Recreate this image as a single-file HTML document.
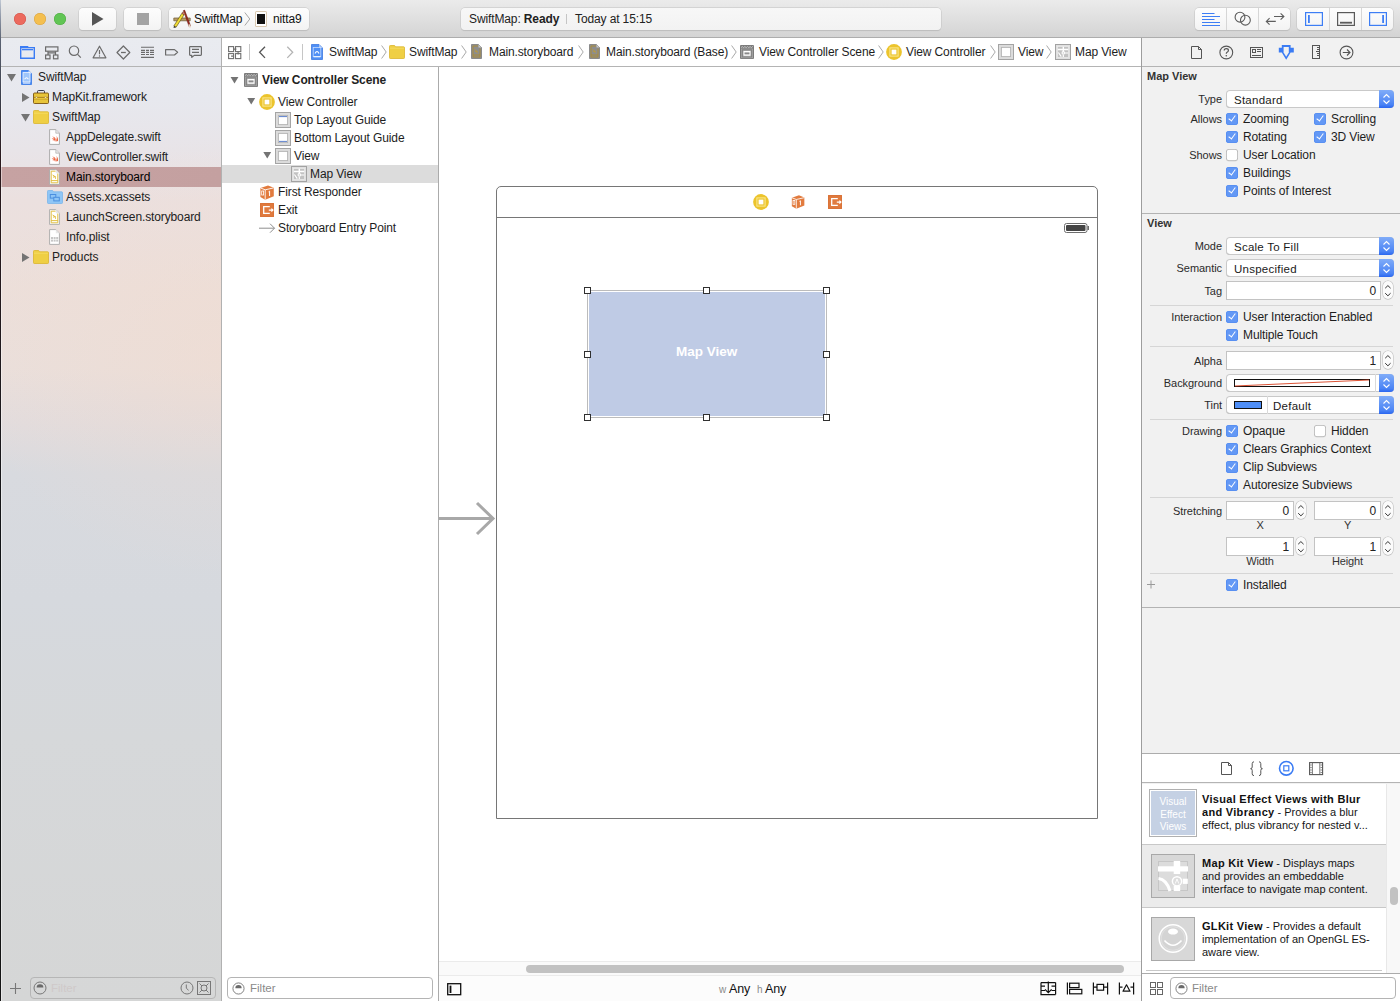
<!DOCTYPE html>
<html><head><meta charset="utf-8">
<style>
*{margin:0;padding:0;box-sizing:border-box}
html,body{width:1400px;height:1001px;overflow:hidden;background:#fff}
body{position:relative;font-family:"Liberation Sans",sans-serif;font-size:12px;color:#1d1d1d;letter-spacing:-0.12px}
.a{position:absolute}
.t{position:absolute;white-space:nowrap;line-height:14px}
svg{position:absolute;overflow:visible}
/* toolbar */
#tb{left:0;top:0;width:1400px;height:38px;background:linear-gradient(#ebebeb,#d4d4d4);border-bottom:1px solid #adadad}
.btn{position:absolute;top:8px;height:22px;border-radius:4px;background:linear-gradient(#fdfdfd,#f3f3f3);box-shadow:0 0 0 0.5px #c4c4c4,0 0.5px 1px rgba(0,0,0,.15)}
#nav{left:0;top:38px;width:221px;height:963px;background:radial-gradient(ellipse 260px 220px at 230px 320px,rgba(242,218,204,0.4),rgba(242,218,204,0) 100%),linear-gradient(180deg,#e9ebf0 0px,#e7e8ee 62px,#e8e4e8 112px,#ebe0df 162px,#ecdfda 250px,#eadfdb 330px,#e2dcdd 385px,#d8dadf 435px,#d6d9de 560px,#d6d8da 700px,#d5d6d6 963px)}
#navline{left:221px;top:38px;width:1px;height:963px;background:#b1b1b1}
#outline{left:222px;top:67px;width:216px;height:934px;background:#fff}
#olline{left:438px;top:67px;width:1px;height:934px;background:#ababab}
#jump{left:222px;top:38px;width:919px;height:28px;background:#fff}
#hline{left:0;top:66px;width:1400px;height:1px;background:#b4b4b4}
#insline{left:1141px;top:38px;width:1px;height:963px;background:#9d9d9d}
#insp{left:1142px;top:38px;width:258px;height:963px;background:#f1f1f1}
.nl{font-size:12px;color:#222}
.lab{position:absolute;white-space:nowrap;text-align:right;color:#2a2a2a;font-size:11px;line-height:14px;letter-spacing:-0.05px}
.cb{position:absolute;width:12px;height:12px;border-radius:3px;background:#6398f5;box-shadow:inset 0 0 0 0.6px #4f88f0}
.cb:after{content:"";position:absolute;left:3.7px;top:1.2px;width:3px;height:6.2px;border:solid #fff;border-width:0 1.9px 1.9px 0;transform:rotate(36deg)}
.cb.off{background:#fff;box-shadow:inset 0 0 0 0.8px #b4b4b4,0 0.5px 0.5px rgba(0,0,0,.1)}
.cb.off:after{display:none}
.pop{position:absolute;left:1226px;width:168px;height:18px;border-radius:4px;background:#fff;box-shadow:inset 0 0 0 1px #c9c9c9,inset 0 -1px 0 #b2b2b2}
.pop .st{position:absolute;right:0;top:0;width:15px;height:18px;border-radius:0 4px 4px 0;background:linear-gradient(#80acf8,#4b84f5 80%,#2a66f0)}
.fld{position:absolute;height:19px;background:#fff;border:1px solid #c3c3c3}
.stp{position:absolute;width:10px;height:18px;border-radius:5px;background:#fbfbfb;box-shadow:0 0 0 0.5px #b8b8b8,0 0.5px 0.5px rgba(0,0,0,.12)}
.lib{position:absolute;left:1202px;font-size:11px;line-height:13.2px;color:#161616;white-space:nowrap;letter-spacing:0}
.lib b{letter-spacing:0.3px;color:#111}
.sep{position:absolute;left:1150px;width:243px;height:1px;background:#d6d6d6}
</style></head><body>


<svg width="0" height="0" style="position:absolute;left:0;top:0">
<defs>
 <symbol id="tdown" viewBox="0 0 9 8"><path d="M0 0H9L4.5 7.5Z" fill="#747474"/></symbol>
 <symbol id="tright" viewBox="0 0 8 9"><path d="M0 0L7.5 4.5L0 9Z" fill="#747474"/></symbol>
 <symbol id="folderY" viewBox="0 0 16 14"><path d="M0.5 1.3Q0.5 0.5 1.3 0.5H5.6L6.6 1.8H14.7Q15.5 1.8 15.5 2.6V12.7Q15.5 13.5 14.7 13.5H1.3Q0.5 13.5 0.5 12.7Z" fill="#efcf44" stroke="#dbb52d" stroke-width="0.8"/><path d="M1 3.2H15" stroke="#f6de6a" stroke-width="0.8"/></symbol>
 <symbol id="proj" viewBox="0 0 11 15"><path d="M0.5 0.5H7.6L10.5 3.4V14.5H0.5Z" fill="#4b8ef5" stroke="#3f7fe6" stroke-width="0.9"/><path d="M7.6 0.5V3.4H10.5Z" fill="#e8f0fc"/><rect x="2" y="2.6" width="7" height="9.4" fill="#9ec6fb" stroke="#f2f7ff" stroke-width="0.8"/><path d="M2 13.1H9" stroke="#fff" stroke-width="0.9"/><path d="M3.6 9.2Q5.5 6.2 7.4 9.2" fill="none" stroke="#fff" stroke-width="1.1"/></symbol>
 <symbol id="swiftF" viewBox="0 0 11 16"><path d="M0.6 0.6H6.8L10.4 4.2V15.4H0.6Z" fill="#fff" stroke="#a4a4a4" stroke-width="0.9"/><path d="M6.8 0.6V4.2H10.4" fill="#e8e8e8" stroke="#a4a4a4" stroke-width="0.6"/><path d="M2.6 9.6Q5 11.6 7 10.5Q6.4 8.4 3.2 7.3Q5.5 9.4 5.8 9.6Q4 9.4 2.6 9.6ZM7.3 10.8Q8.2 12 9.1 11.6Q9.3 9.2 7.5 7.1Q8.4 9.6 7.3 10.8Z" fill="#ec5a33"/><path d="M3 11Q6 13 9 12L8.5 11Q6 12 3 11Z" fill="#e6502b"/></symbol>
 <symbol id="sbF" viewBox="0 0 11 16"><path d="M0.6 0.6H6.8L10.4 4.2V15.4H0.6Z" fill="#fff" stroke="#a8a8a8" stroke-width="0.9"/><path d="M6.8 0.6V4.2H10.4" fill="#e8e8e8"/><path d="M2.2 2.2H6.5M8.8 4.5V13.8H2.2V2.2M2.2 11.6H8.8" fill="none" stroke="#dfb82f" stroke-width="0.9"/><path d="M3.6 6Q6.5 6.8 6.6 9.8M4 8.3Q5.3 7 7 8" fill="none" stroke="#dfb82f" stroke-width="0.9"/></symbol>
 <symbol id="plistF" viewBox="0 0 11 16"><path d="M0.6 0.6H6.8L10.4 4.2V15.4H0.6Z" fill="#fff" stroke="#a8a8a8" stroke-width="0.9"/><path d="M6.8 0.6V4.2H10.4" fill="#e8e8e8"/><g fill="#c6c6c6"><rect x="2" y="8" width="2" height="2"/><rect x="4.6" y="8" width="2" height="2"/><rect x="7.2" y="8" width="2" height="2"/><rect x="2" y="10.6" width="2" height="2"/><rect x="4.6" y="10.6" width="2" height="2"/><rect x="7.2" y="10.6" width="2" height="2"/></g></symbol>
 <symbol id="assets" viewBox="0 0 16 14"><path d="M0.5 1.3Q0.5 0.5 1.3 0.5H5.6L6.6 1.8H14.7Q15.5 1.8 15.5 2.6V12.7Q15.5 13.5 14.7 13.5H1.3Q0.5 13.5 0.5 12.7Z" fill="#8fc6f6" stroke="#7ab5ea" stroke-width="0.8"/><rect x="3.3" y="4.5" width="5.5" height="3.6" fill="none" stroke="#4a8fdf" stroke-width="1"/><rect x="6.8" y="7.3" width="5.5" height="3.6" fill="#8fc6f6" stroke="#4a8fdf" stroke-width="1"/></symbol>
 <symbol id="toolbox" viewBox="0 0 16 14"><path d="M4.5 3.2V1.6Q4.5 0.5 5.6 0.5H10.4Q11.5 0.5 11.5 1.6V3.2" fill="none" stroke="#20263a" stroke-width="0.9"/><rect x="0.5" y="3" width="15" height="10.5" rx="1" fill="#e7c43a" stroke="#7a5410" stroke-width="0.9"/><path d="M0.8 7.4H15.2" stroke="#a47b1f" stroke-width="0.9"/><path d="M1 9.5H15" stroke="#cfa92d" stroke-width="0.8"/><circle cx="3.4" cy="7.4" r="0.9" fill="#fff8d0" stroke="#a47b1f" stroke-width="0.4"/><circle cx="12.6" cy="7.4" r="0.9" fill="#fff8d0" stroke="#a47b1f" stroke-width="0.4"/></symbol>
 <symbol id="chev" viewBox="0 0 6 14"><path d="M0.6 0.5L5.2 7L0.6 13.5" fill="none" stroke="#a9a9a9" stroke-width="1"/></symbol>
 <symbol id="sbDark" viewBox="0 0 11 15"><path d="M0.5 0.5H7.5L10.5 3.5V14.5H0.5Z" fill="#8d8d8d" stroke="#7b7b7b" stroke-width="0.8"/><path d="M7.5 0.5V3.5H10.5Z" fill="#c8c8c8"/><path d="M2 2H7M9 4.5V13H2V2M2 11H9" fill="none" stroke="#ad8d32" stroke-width="0.9"/><path d="M3.4 5.5Q6.2 6.3 6.3 9.2M3.8 7.8Q5 6.5 6.7 7.5" fill="none" stroke="#b89a3e" stroke-width="0.9"/></symbol>
 <symbol id="scene" viewBox="0 0 14 14"><rect x="0" y="0" width="14" height="14" rx="1" fill="#7b7b7b"/><path d="M1 2.6L2.3 1.6L3.6 2.6L4.9 1.6L6.2 2.6L7.5 1.6L8.8 2.6L10.1 1.6L11.4 2.6L12.7 1.6L13 2" fill="none" stroke="#d6d6d6" stroke-width="0.8"/><rect x="1.4" y="4" width="11.2" height="8.8" fill="none" stroke="#a8a8a8" stroke-width="0.8"/><rect x="3" y="5.6" width="8" height="5.6" fill="#fff" stroke="#9a9a9a" stroke-width="0.8"/><rect x="4.5" y="7.4" width="5" height="2" fill="#8a8a8a"/></symbol>
 <symbol id="vc" viewBox="0 0 16 16"><circle cx="8" cy="8" r="7.9" fill="#ecc42c"/><rect x="3.9" y="3.9" width="8.2" height="8.2" fill="none" stroke="#fae68a" stroke-width="1.1"/><rect x="5.6" y="5.6" width="4.8" height="4.8" fill="#fff"/></symbol>
 <symbol id="viewI" viewBox="0 0 16 16"><rect x="0.5" y="0.5" width="15" height="15" fill="#dcdcdc" stroke="#a4a4a4" stroke-width="1"/><rect x="3.4" y="3.4" width="9.2" height="9.2" fill="#fff" stroke="#b4b4b4" stroke-width="0.9"/></symbol>
 <symbol id="mapI" viewBox="0 0 16 16"><rect x="0.5" y="0.5" width="15" height="15" fill="#e0e0e0" stroke="#a2a2a2" stroke-width="1"/><rect x="2.6" y="2.6" width="10.8" height="10.8" fill="#c2c2c2" stroke="#ececec" stroke-width="0.7"/><path d="M2.8 5.5H13.2M8.3 2.8V7.5" stroke="#fff" stroke-width="1.4" fill="none"/><path d="M10 9H13.2M3.4 8.5L6.3 12.6M8.3 10.9V13" stroke="#fff" stroke-width="1.2" fill="none"/><circle cx="8.3" cy="8.9" r="1.25" fill="#c2c2c2" stroke="#fff" stroke-width="1.1"/></symbol>
 <symbol id="frI" viewBox="0 0 14 15"><path d="M0.4 2.9L8 0.4L13.8 2.8V11.2L5.2 14.8L0.4 12Z" fill="#e27b3e"/><path d="M0.6 3L5.2 4.8L13.6 2.9M5.2 4.8V14.6" fill="none" stroke="#fff" stroke-width="0.9"/><rect x="1.7" y="6" width="1.9" height="4" fill="none" stroke="#fff" stroke-width="0.8"/><path d="M8.6 6.8L9.6 6.2V11" fill="none" stroke="#fff" stroke-width="1"/></symbol>
 <symbol id="exitI" viewBox="0 0 14 14"><rect x="0" y="0" width="14" height="14" fill="#e07b3f"/><rect x="0.8" y="0.8" width="12.4" height="12.4" fill="none" stroke="#d46d33" stroke-width="0.6"/><path d="M9.8 3.7H3.7V10.4H9.8" fill="none" stroke="#fff" stroke-width="1.3"/><path d="M8.8 7.1H13M11.4 5.6L13 7.1L11.4 8.6" fill="none" stroke="#fff" stroke-width="1.1"/></symbol>
 <symbol id="guideT" viewBox="0 0 16 16"><rect x="0.5" y="0.5" width="15" height="15" fill="#dcdcdc" stroke="#a4a4a4" stroke-width="1"/><rect x="3.4" y="3.4" width="9.2" height="9.2" fill="#fff" stroke="#b4b4b4" stroke-width="0.9"/><path d="M4 4.6H12" stroke="#4a72c6" stroke-width="0.9"/></symbol>
 <symbol id="guideB" viewBox="0 0 16 16"><rect x="0.5" y="0.5" width="15" height="15" fill="#dcdcdc" stroke="#a4a4a4" stroke-width="1"/><rect x="3.4" y="3.4" width="9.2" height="9.2" fill="#fff" stroke="#b4b4b4" stroke-width="0.9"/><path d="M4 11.4H12" stroke="#4a72c6" stroke-width="0.9"/></symbol>
</defs></svg>

<!-- ============ TOOLBAR ============ -->
<div id="tb" class="a"></div>
<div class="a" style="left:0;top:0;width:1px;height:1001px;z-index:5;background:linear-gradient(#c0c8d4 0px,#8890a0 20px,#5a6272 40px,#3a3d48 100px,#2a181c 160px,#1e1a1e 400px,#0e1214 600px,#141414 1001px)"></div>
<div class="a" style="left:14px;top:13px;width:12px;height:12px;border-radius:50%;background:#ec6a5e;box-shadow:inset 0 0 0 0.5px #d0534a"></div>
<div class="a" style="left:34px;top:13px;width:12px;height:12px;border-radius:50%;background:#f4bf4f;box-shadow:inset 0 0 0 0.5px #d6a243"></div>
<div class="a" style="left:54px;top:13px;width:12px;height:12px;border-radius:50%;background:#61c554;box-shadow:inset 0 0 0 0.5px #4ea941"></div>

<div class="btn" style="left:79px;width:37px"></div>
<svg style="left:92px;top:12px" width="12" height="14"><path d="M0 0 L11.5 6.9 L0 13.8Z" fill="#555"/></svg>
<div class="btn" style="left:124px;width:37px"></div>
<div class="a" style="left:137px;top:13px;width:12px;height:12px;background:#a3a3a3"></div>

<div class="btn" style="left:169px;width:140px"></div>
<div class="t" style="left:194px;top:12px;font-size:12px;color:#111">SwiftMap</div>
<div class="t" style="left:273px;top:12px;font-size:12px;color:#111">nitta9</div>
<svg style="left:173px;top:10px" width="18" height="18">
 <path d="M0.8 8H17.2V10.8H0.8Z" fill="#b89c66" stroke="#6f5a35" stroke-width="0.7"/>
 <path d="M10.4 0.6L11.6 0.1L17.6 15.9L16.2 16.8Z" fill="#a32a1e" stroke="#5e130c" stroke-width="0.5"/>
 <path d="M15.4 14.5L17.3 14.2L17.8 17.4L16 17.4Z" fill="#e8d9c8"/>
 <path d="M0.9 15.8L8.9 3.3L11.1 4.7L3.1 17.2Z" fill="#f2dc36" stroke="#4f430f" stroke-width="0.6"/>
 <path d="M8.9 3.3L9.9 1.8L12.1 3.2L11.1 4.7Z" fill="#e9737d" stroke="#4f430f" stroke-width="0.5"/>
 <path d="M0.9 15.8L3.1 17.2L0.6 17.9Z" fill="#2a2a2a"/>
</svg>
<svg style="left:244px;top:12px" width="7" height="15"><path d="M0.8 0.5L5.8 7L0.8 13.5" fill="none" stroke="#9c9c9c" stroke-width="0.9"/></svg>
<div class="a" style="left:255px;top:11px;width:12px;height:16px;border-radius:1.5px;background:#fff;box-shadow:inset 0 0 0 1px #d9c8b0"></div>
<div class="a" style="left:257px;top:14px;width:8px;height:10px;background:#111"></div>

<div class="btn" style="left:461px;width:480px;background:linear-gradient(#f7f7f7,#f2f2f2)"></div>
<div class="t" style="left:469px;top:12px;color:#222">SwiftMap: <b>Ready</b></div>
<div class="a" style="left:566px;top:14px;width:1px;height:10px;background:#c5c5c5"></div>
<div class="t" style="left:575px;top:12px;color:#222">Today at 15:15</div>

<div class="btn" style="left:1195px;width:95px"></div>
<svg style="left:1202px;top:13px" width="19" height="14"><g stroke="#3d7ef5" stroke-width="1.2"><path d="M0 0.5H12.5M0 3.5H18M0 6.5H12.5M0 9.5H18M0 12.5H18"/></g></svg>
<svg style="left:1234px;top:11px" width="18" height="16"><g fill="none" stroke="#5a5a5a" stroke-width="1.1"><circle cx="6" cy="6.2" r="4.9"/><circle cx="11.4" cy="9.2" r="4.9"/></g></svg>
<svg style="left:1266px;top:13px" width="20" height="13"><g fill="none" stroke="#5e5e5e" stroke-width="1.1"><path d="M8 3.5H18M14.6 0.3L17.9 3.5L14.6 6.7"/><path d="M0.3 8.4H9.8M3.6 5.1L0.3 8.4L3.6 11.6"/></g></svg>
<div class="a" style="left:1226px;top:8px;width:1px;height:22px;background:#d6d6d6"></div>
<div class="a" style="left:1258px;top:8px;width:1px;height:22px;background:#d6d6d6"></div>
<div class="btn" style="left:1297px;width:96px"></div>
<svg style="left:1305px;top:12px" width="18" height="14"><rect x="0.6" y="0.6" width="16.8" height="12.8" fill="none" stroke="#3d7ef5" stroke-width="1.2"/><rect x="3" y="3" width="1.8" height="8" fill="#3d7ef5"/></svg>
<svg style="left:1337px;top:12px" width="18" height="14"><rect x="0.6" y="0.6" width="16.8" height="12.8" fill="none" stroke="#5a5a5a" stroke-width="1.2"/><rect x="3" y="9.8" width="12" height="1.8" fill="#5a5a5a"/></svg>
<svg style="left:1369px;top:12px" width="18" height="14"><rect x="0.6" y="0.6" width="16.8" height="12.8" fill="none" stroke="#3d7ef5" stroke-width="1.2"/><rect x="13.2" y="3" width="1.8" height="8" fill="#3d7ef5"/></svg>
<div class="a" style="left:1329px;top:8px;width:1px;height:22px;background:#d6d6d6"></div>
<div class="a" style="left:1361px;top:8px;width:1px;height:22px;background:#d6d6d6"></div>

<!-- ============ PANELS ============ -->
<div id="nav" class="a"></div>
<div id="jump" class="a"></div>
<div id="outline" class="a"></div>
<div id="insp" class="a"></div>
<div id="hline" class="a"></div>
<div id="navline" class="a"></div>
<div class="a" style="left:1px;top:67px;width:1px;height:934px;background:rgba(255,255,255,0.45);z-index:4"></div>
<div id="olline" class="a"></div>
<div id="insline" class="a"></div>

<!-- ============ NAVIGATOR ============ -->
<div class="a" style="left:1px;top:167px;width:220px;height:20px;background:linear-gradient(90deg,#c6a2a2,#c4a0a0)"></div>
<div class="t nl" style="left:38px;top:70px">SwiftMap</div>
<div class="t nl" style="left:52px;top:90px">MapKit.framework</div>
<div class="t nl" style="left:52px;top:110px">SwiftMap</div>
<div class="t nl" style="left:66px;top:130px">AppDelegate.swift</div>
<div class="t nl" style="left:66px;top:150px">ViewController.swift</div>
<div class="t nl" style="left:66px;top:170px;color:#000">Main.storyboard</div>
<div class="t nl" style="left:66px;top:190px">Assets.xcassets</div>
<div class="t nl" style="left:66px;top:210px">LaunchScreen.storyboard</div>
<div class="t nl" style="left:66px;top:230px">Info.plist</div>
<div class="t nl" style="left:52px;top:250px">Products</div>


<svg style="left:7px;top:74px" width="9" height="8"><use href="#tdown"/></svg>
<svg style="left:21px;top:70px" width="11" height="15"><use href="#proj"/></svg>
<svg style="left:22px;top:93px" width="8" height="9"><use href="#tright"/></svg>
<svg style="left:33px;top:90px" width="16" height="14"><use href="#toolbox"/></svg>
<svg style="left:21px;top:114px" width="9" height="8"><use href="#tdown"/></svg>
<svg style="left:33px;top:110px" width="16" height="14"><use href="#folderY"/></svg>
<svg style="left:49px;top:129px" width="11" height="16"><use href="#swiftF"/></svg>
<svg style="left:49px;top:149px" width="11" height="16"><use href="#swiftF"/></svg>
<svg style="left:49px;top:169px" width="11" height="16"><use href="#sbF"/></svg>
<svg style="left:47px;top:190px" width="16" height="14"><use href="#assets"/></svg>
<svg style="left:49px;top:209px" width="11" height="16"><use href="#sbF"/></svg>
<svg style="left:49px;top:229px" width="11" height="16"><use href="#plistF"/></svg>
<svg style="left:22px;top:253px" width="8" height="9"><use href="#tright"/></svg>
<svg style="left:33px;top:250px" width="16" height="14"><use href="#folderY"/></svg>

<!-- ============ OUTLINE ============ -->
<div class="a" style="left:222px;top:165px;width:216px;height:18px;background:#dcdcdc"></div>
<div class="t" style="left:262px;top:73px;font-weight:bold;color:#222">View Controller Scene</div>
<div class="t" style="left:278px;top:95px">View Controller</div>
<div class="t" style="left:294px;top:113px">Top Layout Guide</div>
<div class="t" style="left:294px;top:131px">Bottom Layout Guide</div>
<div class="t" style="left:294px;top:149px">View</div>
<div class="t" style="left:310px;top:167px">Map View</div>
<div class="t" style="left:278px;top:185px">First Responder</div>
<div class="t" style="left:278px;top:203px">Exit</div>
<div class="t" style="left:278px;top:221px">Storyboard Entry Point</div>


<!-- ============ NAV TAB ICONS ============ -->
<svg style="left:20px;top:46px" width="15" height="13"><g fill="none" stroke="#3b7cf4" stroke-width="1.4"><path d="M0.7 12.3V1.6H7.5V0.7H7.6V1.6H14.3V12.3Z"/><path d="M2 3.6H13"/></g><path d="M0 0H8V1.5H0Z" fill="#3b7cf4"/></svg>
<svg style="left:45px;top:46px" width="14" height="14"><g fill="none" stroke="#6b6b6b" stroke-width="1.2"><rect x="0.6" y="0.9" width="12.3" height="4.3"/><path d="M3 5.2V9M10.5 5.2V9M3 6.9H10.5"/><rect x="0.6" y="9" width="4.4" height="3.8"/><rect x="8.5" y="9" width="4.4" height="3.8"/></g></svg>
<svg style="left:68px;top:45px" width="14" height="14"><g fill="none" stroke="#6b6b6b" stroke-width="1.2"><circle cx="6" cy="5.7" r="4.7"/><path d="M9.4 9.2L12.8 12.6"/></g></svg>
<svg style="left:92px;top:45px" width="15" height="15"><g fill="none" stroke="#6b6b6b" stroke-width="1.2" stroke-linejoin="round"><path d="M7.5 1.2L13.9 12.8H1.1Z"/><path d="M7.5 5V9.3"/></g><circle cx="7.5" cy="11" r="0.7" fill="#6b6b6b"/></svg>
<svg style="left:116px;top:45px" width="15" height="15"><g fill="none" stroke="#6b6b6b" stroke-width="1.2" stroke-linejoin="round"><path d="M7.4 1L13.8 7.5L7.4 14L1 7.5Z"/><path d="M5 7.5H9.8" stroke-width="1.3"/></g></svg>
<svg style="left:141px;top:46px" width="14" height="13"><g fill="none" stroke="#6b6b6b" stroke-width="1.1"><path d="M0 1.3H13M0 11.4H13"/><path d="M0 4.4H4M5 4.4H8M9 4.4H13M0 6.4H4M5 6.4H8M9 6.4H13M0 8.5H4M5 8.5H8M9 8.5H13"/></g></svg>
<svg style="left:165px;top:49px" width="14" height="8"><path d="M0.6 0.6H9.5L12.6 3.3L9.5 6H0.6Z" fill="none" stroke="#6b6b6b" stroke-width="1.2" stroke-linejoin="round"/></svg>
<svg style="left:189px;top:46px" width="14" height="13"><g fill="none" stroke="#6b6b6b" stroke-width="1.2" stroke-linejoin="round"><path d="M1.2 0.6H11.6Q12.4 0.6 12.4 1.4V8.6Q12.4 9.4 11.6 9.4H5.2L2.8 11.4V9.4H1.2Q0.6 9.4 0.6 8.6V1.4Q0.6 0.6 1.2 0.6Z"/><path d="M3 3.4H10M3 6.4H10"/></g></svg>

<!-- ============ JUMP BAR ICONS ============ -->
<svg style="left:228px;top:46px" width="14" height="14"><g fill="none" stroke="#6e6e6e" stroke-width="1.1"><rect x="0.6" y="0.6" width="5" height="5"/><rect x="7.5" y="0.6" width="5.3" height="5"/><rect x="0.6" y="7.6" width="5" height="5"/><rect x="7.5" y="7.6" width="5.3" height="5"/><path d="M5.6 3.1H8.4M10.1 5.6V8.4M3.1 10.1H5.6"/></g></svg>
<div class="a" style="left:249px;top:44px;width:1px;height:16px;background:#c6c6c6"></div>
<svg style="left:258px;top:46px" width="9" height="13"><path d="M7 0.7L1.6 6.3L7 11.9" fill="none" stroke="#555" stroke-width="1.3"/></svg>
<svg style="left:286px;top:46px" width="9" height="13"><path d="M1.3 0.7L6.7 6.3L1.3 11.9" fill="none" stroke="#b4b4b4" stroke-width="1.3"/></svg>
<div class="a" style="left:302px;top:44px;width:1px;height:16px;background:#c6c6c6"></div>
<svg style="left:311px;top:44px" width="12" height="16"><path d="M0.5 0.5H8L11.5 4V15.5H0.5Z" fill="#4f8ff5" stroke="#3d78e0" stroke-width="0.8"/><path d="M8 0.5V4H11.5" fill="#a9c8fa"/><rect x="2.2" y="3.5" width="7.6" height="9" fill="none" stroke="#c7dcfd" stroke-width="0.8"/><path d="M2.5 12.8H9.5" stroke="#fff" stroke-width="1"/><path d="M4 9.5Q6 5.5 8 9.5" fill="none" stroke="#fff" stroke-width="1.1"/></svg>


<svg style="left:230px;top:77px" width="9" height="7"><use href="#tdown"/></svg>
<svg style="left:244px;top:73px" width="14" height="14"><use href="#scene"/></svg>
<svg style="left:247px;top:98px" width="8.5" height="7"><use href="#tdown"/></svg>
<svg style="left:259px;top:94px" width="16" height="16"><use href="#vc"/></svg>
<svg style="left:275px;top:112px" width="16" height="16"><use href="#guideT"/></svg>
<svg style="left:275px;top:130px" width="16" height="16"><use href="#guideB"/></svg>
<svg style="left:263px;top:152px" width="8.5" height="7"><use href="#tdown"/></svg>
<svg style="left:275px;top:148px" width="16" height="16"><use href="#viewI"/></svg>
<svg style="left:291px;top:166px" width="16" height="16"><use href="#mapI"/></svg>
<svg style="left:260px;top:185px" width="14" height="15"><use href="#frI"/></svg>
<svg style="left:260px;top:203px" width="14" height="14"><use href="#exitI"/></svg>
<svg style="left:259px;top:223px" width="17" height="11"><path d="M0 5.2H15.5M11 0.7L15.5 5.2L11 9.7" fill="none" stroke="#8e8e8e" stroke-width="1"/></svg>

<!-- ============ JUMP BAR ============ -->
<div class="t" style="left:329px;top:45px">SwiftMap</div>
<div class="t" style="left:409px;top:45px">SwiftMap</div>
<div class="t" style="left:489px;top:45px">Main.storyboard</div>
<div class="t" style="left:606px;top:45px">Main.storyboard (Base)</div>
<div class="t" style="left:759px;top:45px">View Controller Scene</div>
<div class="t" style="left:906px;top:45px">View Controller</div>
<div class="t" style="left:1018px;top:45px">View</div>
<div class="t" style="left:1075px;top:45px">Map View</div>


<svg style="left:381px;top:45px" width="6" height="14"><use href="#chev"/></svg>
<svg style="left:389px;top:45px" width="16" height="14"><use href="#folderY"/></svg>
<svg style="left:461px;top:45px" width="6" height="14"><use href="#chev"/></svg>
<svg style="left:471px;top:44px" width="11" height="15"><use href="#sbDark"/></svg>
<svg style="left:578px;top:45px" width="6" height="14"><use href="#chev"/></svg>
<svg style="left:589px;top:44px" width="11" height="15"><use href="#sbDark"/></svg>
<svg style="left:731px;top:45px" width="6" height="14"><use href="#chev"/></svg>
<svg style="left:740px;top:45px" width="14" height="14"><use href="#scene"/></svg>
<svg style="left:878px;top:45px" width="6" height="14"><use href="#chev"/></svg>
<svg style="left:886px;top:44px" width="16" height="16"><use href="#vc"/></svg>
<svg style="left:990px;top:45px" width="6" height="14"><use href="#chev"/></svg>
<svg style="left:998px;top:44px" width="16" height="16"><use href="#viewI"/></svg>
<svg style="left:1046px;top:45px" width="6" height="14"><use href="#chev"/></svg>
<svg style="left:1055px;top:44px" width="16" height="16"><use href="#mapI"/></svg>

<!-- ============ CANVAS ============ -->
<div class="a" style="left:496px;top:186px;width:602px;height:633px;border:1px solid #767676;border-radius:5px 5px 0 0"></div>
<div class="a" style="left:497px;top:217px;width:600px;height:1px;background:#767676"></div>
<svg style="left:753px;top:194px" width="16" height="16"><use href="#vc"/></svg>
<svg style="left:791px;top:195px" width="14" height="14"><use href="#frI"/></svg>
<svg style="left:828px;top:195px" width="14" height="14"><use href="#exitI"/></svg>
<svg style="left:1064px;top:223px" width="27" height="11"><rect x="0.5" y="0.5" width="22.5" height="9" rx="2" fill="#fff" stroke="#6d6d6d" stroke-width="1"/><rect x="2" y="2" width="19.5" height="6" rx="1" fill="#454545"/><rect x="23.5" y="3" width="1.5" height="4" fill="#6d6d6d"/></svg>
<div class="a" style="left:587px;top:290px;width:240px;height:128px;border:1px solid #bcbcbc;background:#fff"></div>
<div class="a" style="left:589px;top:292px;width:236px;height:124px;background:#bfcbe5"></div>
<div class="t" style="left:676px;top:345px;font-weight:bold;font-size:13.5px;color:#fff;letter-spacing:0">Map View</div>
<div class="a" style="left:584px;top:287px;width:7px;height:7px;border:1px solid #303030;background:#fff"></div>
<div class="a" style="left:703px;top:287px;width:7px;height:7px;border:1px solid #303030;background:#fff"></div>
<div class="a" style="left:823px;top:287px;width:7px;height:7px;border:1px solid #303030;background:#fff"></div>
<div class="a" style="left:584px;top:351px;width:7px;height:7px;border:1px solid #303030;background:#fff"></div>
<div class="a" style="left:823px;top:351px;width:7px;height:7px;border:1px solid #303030;background:#fff"></div>
<div class="a" style="left:584px;top:414px;width:7px;height:7px;border:1px solid #303030;background:#fff"></div>
<div class="a" style="left:703px;top:414px;width:7px;height:7px;border:1px solid #303030;background:#fff"></div>
<div class="a" style="left:823px;top:414px;width:7px;height:7px;border:1px solid #303030;background:#fff"></div>
<svg style="left:439px;top:501px" width="58" height="36"><path d="M0 17.5H54M38 2L54 17.5L38 33" fill="none" stroke="#a8a8a8" stroke-width="3"/></svg>
<!-- bottom bar -->
<div class="a" style="left:439px;top:961px;width:702px;height:15px;background:#fafafa;border-top:1px solid #ebebeb;border-bottom:1px solid #ebebeb"></div>
<div class="a" style="left:526px;top:965px;width:598px;height:8px;border-radius:4px;background:#c2c2c2"></div>
<div class="a" style="left:439px;top:976px;width:702px;height:25px;background:#fcfcfc"></div>
<svg style="left:447px;top:983px" width="15" height="13"><rect x="0.7" y="0.7" width="13" height="11" fill="none" stroke="#111" stroke-width="1.3"/><rect x="2.6" y="2.6" width="1.8" height="7.4" fill="#111"/></svg>
<div class="t" style="left:719px;top:983px;font-size:10px;color:#8a8a8a;letter-spacing:0">w</div>
<div class="t" style="left:729px;top:982px;font-size:12.5px;color:#111;letter-spacing:-0.2px">Any</div>
<div class="t" style="left:757px;top:983px;font-size:10px;color:#8a8a8a;letter-spacing:0">h</div>
<div class="t" style="left:765px;top:982px;font-size:12.5px;color:#111;letter-spacing:-0.2px">Any</div>

<!-- ============ INSPECTOR ============ -->
<!-- ============ INSPECTOR CONTENT ============ -->
<svg style="left:1191px;top:46px" width="12" height="14"><path d="M0.5 0.5H7.5L10.5 3.5V12.5H0.5Z M7.5 0.5V3.5H10.5" fill="none" stroke="#555" stroke-width="1"/></svg>
<svg style="left:1219px;top:45px" width="15" height="15"><circle cx="7.3" cy="7.5" r="6.4" fill="none" stroke="#555" stroke-width="1.1"/><path d="M5.2 5.6Q5.2 3.7 7.3 3.7Q9.4 3.7 9.4 5.5Q9.4 6.6 8.1 7.2Q7.3 7.6 7.3 8.7" fill="none" stroke="#555" stroke-width="1.2"/><circle cx="7.3" cy="10.7" r="0.8" fill="#555"/></svg>
<svg style="left:1250px;top:47px" width="14" height="11"><rect x="0.5" y="0.5" width="12" height="10" fill="none" stroke="#555" stroke-width="1"/><rect x="2" y="2" width="4" height="4" fill="#555"/><rect x="3" y="3" width="2" height="2" fill="#f1f1f1"/><path d="M7 2.5H11M7 4.5H11M2 8.5H11" stroke="#555" stroke-width="1"/></svg>
<svg style="left:1278px;top:44px" width="17" height="17"><path d="M3.8 1H12.6V3.8H15.8V8.4H12.6L8.2 15.8L3.8 8.4H0.8V3.8H3.8Z" fill="#3b7cf4"/><path d="M5.6 3H10.8V8.6L8.2 12.8L5.6 8.6Z" fill="#f1f1f1"/></svg>
<svg style="left:1312px;top:45px" width="9" height="15"><rect x="0.5" y="0.5" width="7" height="13" fill="none" stroke="#555" stroke-width="1"/><path d="M5 2.5H7.5M5 4.5H7.5M4 6.5H7.5M5 8.5H7.5M5 10.5H7.5" stroke="#555" stroke-width="1"/></svg>
<svg style="left:1339px;top:45px" width="15" height="15"><circle cx="7.5" cy="7.5" r="6.4" fill="none" stroke="#555" stroke-width="1.1"/><path d="M3.8 7.5H11M8 4.5L11 7.5L8 10.5" fill="none" stroke="#555" stroke-width="1.1"/></svg>
<div class="t" style="left:1147px;top:69px;font-weight:bold;font-size:11px;color:#333;letter-spacing:0">Map View</div>
<div class="lab" style="right:178px;top:92.2px">Type</div>
<div class="pop" style="top:90px;height:18px"><div class="st" style="height:18px"></div></div>
<svg style="left:1382px;top:93px" width="9" height="12"><path d="M1.5 4.5L4.5 1.5L7.5 4.5M1.5 7.5L4.5 10.5L7.5 7.5" fill="none" stroke="#fff" stroke-width="1.1"/></svg>
<div class="t" style="left:1234px;top:93.0px;color:#1a1a1a;font-size:11.5px;letter-spacing:0.25px">Standard</div>
<div class="lab" style="right:178px;top:112.2px">Allows</div>
<div class="cb" style="left:1226px;top:113px"></div>
<div class="t" style="left:1243px;top:111.8px;">Zooming</div>
<div class="cb" style="left:1314px;top:113px"></div>
<div class="t" style="left:1331px;top:111.8px;">Scrolling</div>
<div class="cb" style="left:1226px;top:131px"></div>
<div class="t" style="left:1243px;top:129.8px;">Rotating</div>
<div class="cb" style="left:1314px;top:131px"></div>
<div class="t" style="left:1331px;top:129.8px;">3D View</div>
<div class="lab" style="right:178px;top:148.2px">Shows</div>
<div class="cb off" style="left:1226px;top:149px"></div>
<div class="t" style="left:1243px;top:147.8px;">User Location</div>
<div class="cb" style="left:1226px;top:167px"></div>
<div class="t" style="left:1243px;top:165.8px;">Buildings</div>
<div class="cb" style="left:1226px;top:185px"></div>
<div class="t" style="left:1243px;top:183.8px;">Points of Interest</div>
<div class="a" style="left:1142px;top:213px;width:258px;height:1px;background:#b3b3b3"></div>
<div class="t" style="left:1147px;top:216px;font-weight:bold;font-size:11px;color:#333;letter-spacing:0">View</div>
<div class="lab" style="right:178px;top:239.2px">Mode</div>
<div class="pop" style="top:237px;height:18px"><div class="st" style="height:18px"></div></div>
<svg style="left:1382px;top:240px" width="9" height="12"><path d="M1.5 4.5L4.5 1.5L7.5 4.5M1.5 7.5L4.5 10.5L7.5 7.5" fill="none" stroke="#fff" stroke-width="1.1"/></svg>
<div class="t" style="left:1234px;top:240.0px;color:#1a1a1a;font-size:11.5px;letter-spacing:0.25px">Scale To Fill</div>
<div class="lab" style="right:178px;top:261.2px">Semantic</div>
<div class="pop" style="top:259px;height:18px"><div class="st" style="height:18px"></div></div>
<svg style="left:1382px;top:262px" width="9" height="12"><path d="M1.5 4.5L4.5 1.5L7.5 4.5M1.5 7.5L4.5 10.5L7.5 7.5" fill="none" stroke="#fff" stroke-width="1.1"/></svg>
<div class="t" style="left:1234px;top:262.0px;color:#1a1a1a;font-size:11.5px;letter-spacing:0.25px">Unspecified</div>
<div class="lab" style="right:178px;top:284.2px">Tag</div>
<div class="fld" style="left:1226px;top:281px;width:155px;height:19px"></div>
<div class="t" style="right:24px;top:284px;color:#222">0</div>
<div class="stp" style="left:1383px;top:281px"></div>
<svg style="left:1384px;top:284px" width="8" height="14"><path d="M1.2 4.2L3.9 1.6L6.6 4.2M1.2 9.2L3.9 11.8L6.6 9.2" fill="none" stroke="#333" stroke-width="1"/></svg>
<div class="sep" style="top:305px"></div>
<div class="lab" style="right:178px;top:310.2px">Interaction</div>
<div class="cb" style="left:1226px;top:311px"></div>
<div class="t" style="left:1243px;top:309.8px;">User Interaction Enabled</div>
<div class="cb" style="left:1226px;top:329px"></div>
<div class="t" style="left:1243px;top:327.8px;">Multiple Touch</div>
<div class="sep" style="top:346px"></div>
<div class="lab" style="right:178px;top:354.2px">Alpha</div>
<div class="fld" style="left:1226px;top:351px;width:155px;height:19px"></div>
<div class="t" style="right:24px;top:354px;color:#222">1</div>
<div class="stp" style="left:1383px;top:351px"></div>
<svg style="left:1384px;top:354px" width="8" height="14"><path d="M1.2 4.2L3.9 1.6L6.6 4.2M1.2 9.2L3.9 11.8L6.6 9.2" fill="none" stroke="#333" stroke-width="1"/></svg>
<div class="lab" style="right:178px;top:376.2px">Background</div>
<div class="pop" style="top:374px;height:18px"><div class="st" style="height:18px"></div></div>
<svg style="left:1382px;top:377px" width="9" height="12"><path d="M1.5 4.5L4.5 1.5L7.5 4.5M1.5 7.5L4.5 10.5L7.5 7.5" fill="none" stroke="#fff" stroke-width="1.1"/></svg>
<div class="a" style="left:1234px;top:379px;width:136px;height:8px;background:#fff;border:1px solid #111"></div>
<svg style="left:1235px;top:380px" width="134" height="6"><path d="M0 6L134 0" stroke="#d8401e" stroke-width="0.9"/></svg>
<div class="a" style="left:1375px;top:374px;width:1px;height:18px;background:#dadada"></div>
<div class="lab" style="right:178px;top:398.2px">Tint</div>
<div class="pop" style="top:396px;height:18px"><div class="st" style="height:18px"></div></div>
<svg style="left:1382px;top:399px" width="9" height="12"><path d="M1.5 4.5L4.5 1.5L7.5 4.5M1.5 7.5L4.5 10.5L7.5 7.5" fill="none" stroke="#fff" stroke-width="1.1"/></svg>
<div class="t" style="left:1273px;top:399.0px;color:#1a1a1a;font-size:11.5px;letter-spacing:0.25px">Default</div>
<div class="a" style="left:1234px;top:401px;width:28px;height:8px;background:#4e8ef7;border:1px solid #111"></div>
<div class="a" style="left:1267px;top:396px;width:1px;height:18px;background:#dadada"></div>
<div class="sep" style="top:419px"></div>
<div class="lab" style="right:178px;top:424.2px">Drawing</div>
<div class="cb" style="left:1226px;top:425px"></div>
<div class="t" style="left:1243px;top:423.8px;">Opaque</div>
<div class="cb off" style="left:1314px;top:425px"></div>
<div class="t" style="left:1331px;top:423.8px;">Hidden</div>
<div class="cb" style="left:1226px;top:443px"></div>
<div class="t" style="left:1243px;top:441.8px;">Clears Graphics Context</div>
<div class="cb" style="left:1226px;top:461px"></div>
<div class="t" style="left:1243px;top:459.8px;">Clip Subviews</div>
<div class="cb" style="left:1226px;top:479px"></div>
<div class="t" style="left:1243px;top:477.8px;">Autoresize Subviews</div>
<div class="sep" style="top:497px"></div>
<div class="lab" style="right:178px;top:504.2px">Stretching</div>
<div class="fld" style="left:1226px;top:501px;width:68px;height:19px"></div>
<div class="t" style="right:111px;top:504px;color:#222">0</div>
<div class="stp" style="left:1296px;top:501px"></div>
<svg style="left:1297px;top:504px" width="8" height="14"><path d="M1.2 4.2L3.9 1.6L6.6 4.2M1.2 9.2L3.9 11.8L6.6 9.2" fill="none" stroke="#333" stroke-width="1"/></svg>
<div class="fld" style="left:1314px;top:501px;width:67px;height:19px"></div>
<div class="t" style="right:24px;top:504px;color:#222">0</div>
<div class="stp" style="left:1383px;top:501px"></div>
<svg style="left:1384px;top:504px" width="8" height="14"><path d="M1.2 4.2L3.9 1.6L6.6 4.2M1.2 9.2L3.9 11.8L6.6 9.2" fill="none" stroke="#333" stroke-width="1"/></svg>
<div class="t" style="left:1226px;width:68px;text-align:center;top:518px;font-size:11px;color:#333">X</div>
<div class="t" style="left:1314px;width:67px;text-align:center;top:518px;font-size:11px;color:#333">Y</div>
<div class="fld" style="left:1226px;top:537px;width:68px;height:19px"></div>
<div class="t" style="right:111px;top:540px;color:#222">1</div>
<div class="stp" style="left:1296px;top:537px"></div>
<svg style="left:1297px;top:540px" width="8" height="14"><path d="M1.2 4.2L3.9 1.6L6.6 4.2M1.2 9.2L3.9 11.8L6.6 9.2" fill="none" stroke="#333" stroke-width="1"/></svg>
<div class="fld" style="left:1314px;top:537px;width:67px;height:19px"></div>
<div class="t" style="right:24px;top:540px;color:#222">1</div>
<div class="stp" style="left:1383px;top:537px"></div>
<svg style="left:1384px;top:540px" width="8" height="14"><path d="M1.2 4.2L3.9 1.6L6.6 4.2M1.2 9.2L3.9 11.8L6.6 9.2" fill="none" stroke="#333" stroke-width="1"/></svg>
<div class="t" style="left:1226px;width:68px;text-align:center;top:554px;font-size:11px;color:#333">Width</div>
<div class="t" style="left:1314px;width:67px;text-align:center;top:554px;font-size:11px;color:#333">Height</div>
<div class="sep" style="top:573px"></div>
<svg style="left:1147px;top:580px" width="9" height="9"><path d="M4 0.5V8.5M0 4.5H8" stroke="#9a9a9a" stroke-width="1"/></svg>
<div class="cb" style="left:1226px;top:579px"></div>
<div class="t" style="left:1243px;top:577.8px;">Installed</div>
<div class="a" style="left:1142px;top:607px;width:258px;height:1px;background:#b3b3b3"></div>
<div class="a" style="left:1142px;top:753px;width:258px;height:30px;background:#fff;border-top:1px solid #acacac;border-bottom:1px solid #b4b4b4"></div>

<svg style="left:1040px;top:981px" width="17" height="15"><g fill="none" stroke="#111" stroke-width="1.2"><path d="M1 1.6H15.6M1 1.6V13.6H15.6M15.6 1.6V13.6M1 5.2H5M11.5 5.2H15.6M1 9.5H5M11.5 9.5H15.6"/><path d="M8.3 0.5V11.5M5 8.4L8.3 11.6L11.6 8.4"/></g></svg>
<svg style="left:1066px;top:982px" width="17" height="13"><g fill="none" stroke="#111" stroke-width="1.2"><path d="M1.4 0.4V12.6"/><rect x="3.6" y="1.2" width="9.4" height="4.4"/><rect x="3.6" y="7.4" width="12.2" height="4.4"/></g></svg>
<svg style="left:1092px;top:982px" width="17" height="13"><g fill="none" stroke="#111" stroke-width="1.2"><path d="M1.4 0.4V12.6M15.6 0.4V12.6M1.4 5.2H5M11.6 5.2H15.6"/><rect x="5" y="2.4" width="6.6" height="5.8"/></g></svg>
<svg style="left:1118px;top:982px" width="17" height="13"><g fill="none" stroke="#111" stroke-width="1.2" stroke-linejoin="round"><path d="M1.4 0.4V12.6M15.6 0.4V12.6M1.4 5.2H4.5M12.5 5.2H15.6"/><path d="M8.5 2.8L12 9.2H5Z"/></g></svg>
<!-- library -->
<svg style="left:1221px;top:762px" width="12" height="14"><path d="M0.5 0.5H7.5L10.5 3.5V12.5H0.5Z M7.5 0.5V3.5H10.5" fill="none" stroke="#555" stroke-width="1"/></svg>
<svg style="left:1250px;top:761px" width="13" height="16"><path d="M4 0.8Q2.2 0.8 2.2 2.6V6Q2.2 7.7 0.6 7.7Q2.2 7.7 2.2 9.4V12.8Q2.2 14.6 4 14.6M9 0.8Q10.8 0.8 10.8 2.6V6Q10.8 7.7 12.4 7.7Q10.8 7.7 10.8 9.4V12.8Q10.8 14.6 9 14.6" fill="none" stroke="#555" stroke-width="1"/></svg>
<svg style="left:1278px;top:760px" width="17" height="17"><circle cx="8.3" cy="8.3" r="6.8" fill="none" stroke="#3b7cf4" stroke-width="1.6"/><rect x="5.8" y="5.8" width="5" height="5" fill="none" stroke="#3b7cf4" stroke-width="1.2"/></svg>
<svg style="left:1309px;top:762px" width="15" height="14"><rect x="0.6" y="0.6" width="13" height="12" fill="none" stroke="#555" stroke-width="1.1"/><path d="M3.4 1V12.6M10.8 1V12.6" stroke="#555" stroke-width="0.8"/><path d="M1.5 3H2.5M1.5 5.5H2.5M1.5 8H2.5M1.5 10.5H2.5M11.7 3H12.7M11.7 5.5H12.7M11.7 8H12.7M11.7 10.5H12.7" stroke="#555" stroke-width="1"/></svg>
<div class="a" style="left:1142px;top:784px;width:244px;height:189px;background:#fff"></div>
<div class="a" style="left:1386px;top:784px;width:14px;height:189px;background:#f8f8f8;border-left:1px solid #e8e8e8"></div>
<div class="a" style="left:1390px;top:887px;width:8px;height:18px;border-radius:4px;background:#c2c2c2"></div>
<div class="a" style="left:1149px;top:789px;width:48px;height:48px;border:1px solid #b0b0b0;background:#fff"></div>
<div class="a" style="left:1151px;top:791px;width:44px;height:44px;background:#c5d1e4"></div>
<div class="a" style="left:1151px;top:796px;width:44px;text-align:center;font-size:10px;line-height:12.5px;color:#fff;letter-spacing:0">Visual<br>Effect<br>Views</div>
<div class="a" style="left:1142px;top:844px;width:244px;height:1px;background:#c8c8c8"></div>
<div class="a" style="left:1142px;top:845px;width:244px;height:62px;background:#ebebeb"></div>
<div class="a" style="left:1142px;top:907px;width:244px;height:1px;background:#c8c8c8"></div>
<div class="a" style="left:1146px;top:970px;width:236px;height:1px;background:#c8c8c8"></div>
<div class="lib" style="top:793px"><b>Visual Effect Views with Blur</b><br><b>and Vibrancy</b> - Provides a blur<br>effect, plus vibrancy for nested v...</div>
<div class="lib" style="top:857px"><b>Map Kit View</b> - Displays maps<br>and provides an embeddable<br>interface to navigate map content.</div>
<div class="lib" style="top:920px"><b>GLKit View</b> - Provides a default<br>implementation of an OpenGL ES-<br>aware view.</div>
<svg style="left:1151px;top:854px" width="44" height="44"><rect x="0.5" y="0.5" width="43" height="43" fill="#d8d8d8" stroke="#a8a8a8" stroke-width="1"/><rect x="7.5" y="7.5" width="29" height="29" fill="#dcdcdc" stroke="#c6c6c6" stroke-width="1"/><g fill="#fff"><rect x="7" y="12.3" width="30" height="5.2"/><rect x="22.7" y="7" width="6.5" height="13"/><rect x="31.8" y="24.7" width="5" height="5.2"/><rect x="22.7" y="32" width="6.5" height="5"/></g><path d="M7.5 24.5Q15.5 25.5 19 37" fill="none" stroke="#fff" stroke-width="3.2"/><circle cx="26" cy="27.3" r="4.6" fill="#dcdcdc" stroke="#fff" stroke-width="1.5"/><path d="M24.3 29.5L26 25L27.7 29.5" fill="none" stroke="#fff" stroke-width="0.9"/></svg>
<svg style="left:1151px;top:917px" width="44" height="44"><rect x="0.5" y="0.5" width="43" height="43" fill="#d8d8d8" stroke="#a8a8a8" stroke-width="1"/><circle cx="22" cy="21.5" r="13.8" fill="#d8d8d8" stroke="#fff" stroke-width="1.5"/><circle cx="22" cy="21.5" r="11.8" fill="#d4d4d4" stroke="#e2e2e2" stroke-width="0.8"/><ellipse cx="22" cy="14.6" rx="5" ry="3" fill="#fff"/><path d="M13.5 23.5Q22 33 30.5 23.5" fill="none" stroke="#fff" stroke-width="1.6"/></svg>
<div class="a" style="left:1142px;top:973px;width:258px;height:28px;background:#fff;border-top:1px solid #ababab"></div>
<svg style="left:1150px;top:982px" width="14" height="13"><g fill="none" stroke="#666" stroke-width="1"><rect x="0.5" y="0.5" width="5" height="5"/><rect x="7.5" y="0.5" width="5" height="5"/><rect x="0.5" y="7.5" width="5" height="5"/><rect x="7.5" y="7.5" width="5" height="5"/></g></svg>
<!-- filters -->
<svg width="0" height="0" style="position:absolute"><defs><symbol id="fic" viewBox="0 0 14 14"><circle cx="7" cy="7" r="6" fill="none" stroke="#777" stroke-width="1"/><path d="M3.6 6.6A3.4 3.4 0 0 1 10.4 6.6Z" fill="#6a6a6a"/></symbol></defs></svg>
<svg style="left:10px;top:983px" width="12" height="12"><path d="M5.5 0V11M0 5.5H11" stroke="#777" stroke-width="1.1"/></svg>
<div class="a" style="left:30px;top:977px;width:186px;height:22px;border:1px solid #b6b6b6;border-radius:4px;background:rgba(255,255,255,0.04)"></div>
<svg style="left:33px;top:981px" width="14" height="14"><use href="#fic"/></svg>
<div class="t" style="left:51px;top:981px;font-size:11.5px;color:#cfc9c9;letter-spacing:0">Filter</div>
<svg style="left:180px;top:981px" width="14" height="14"><circle cx="7" cy="7" r="6" fill="none" stroke="#777" stroke-width="1"/><path d="M6.3 3.5V7.2L8.6 9.3" fill="none" stroke="#777" stroke-width="1"/></svg>
<svg style="left:197px;top:981px" width="14" height="14"><rect x="0.5" y="0.5" width="13" height="13" fill="none" stroke="#777" stroke-width="1"/><path d="M2.5 2.5L11.5 11.5M11.5 2.5L2.5 11.5" stroke="#777" stroke-width="1"/><circle cx="7" cy="7" r="3" fill="#d5d6d6" stroke="#777" stroke-width="1"/></svg>
<div class="a" style="left:227px;top:977px;width:206px;height:22px;border:1px solid #b4b4b4;border-radius:4px;background:#fff"></div>
<svg style="left:232px;top:982px" width="13" height="13"><use href="#fic"/></svg>
<div class="t" style="left:250px;top:981px;font-size:11.5px;color:#8a8a8a;letter-spacing:0">Filter</div>
<div class="a" style="left:1170px;top:977px;width:226px;height:22px;border:1px solid #b4b4b4;border-radius:4px;background:#fff"></div>
<svg style="left:1175px;top:982px" width="13" height="13"><use href="#fic"/></svg>
<div class="t" style="left:1192px;top:981px;font-size:11.5px;color:#8a8a8a;letter-spacing:0">Filter</div>
</body></html>
